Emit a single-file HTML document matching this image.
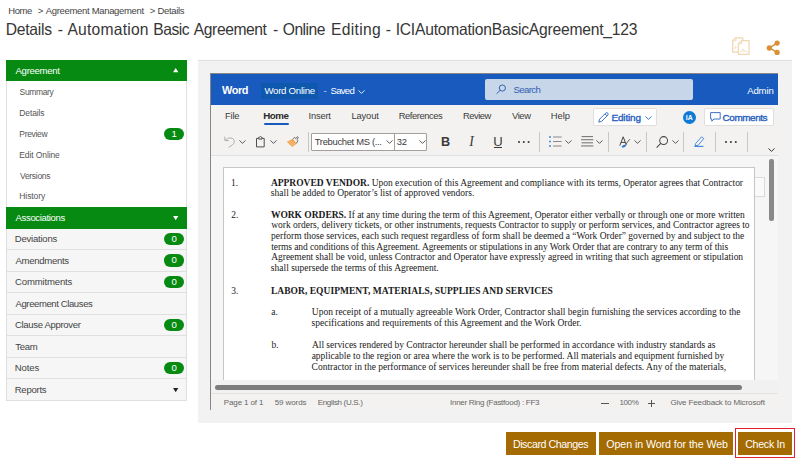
<!DOCTYPE html>
<html lang="en">
<head>
<meta charset="utf-8">
<title>Details - Automation Basic Agreement - Online Editing</title>
<style>
html,body{margin:0;padding:0;background:#fff;}
body{width:800px;height:463px;position:relative;overflow:hidden;font-family:"Liberation Sans",sans-serif;}
.a{position:absolute;box-sizing:border-box;}
.t{position:absolute;white-space:nowrap;font-family:"Liberation Sans",sans-serif;}
.g{background:#078a12;}
.row{position:absolute;left:6px;width:181.3px;box-sizing:border-box;background:#f6f6f6;border-left:1px solid #e0e0e0;border-right:1px solid #e0e0e0;border-bottom:1px solid #e0e0e0;}
.badge{position:absolute;left:164.3px;width:19.7px;height:12.4px;border-radius:6.2px;background:#078a12;color:#fff;font-size:9.6px;line-height:12.6px;text-align:center;}
.sep{position:absolute;width:1px;background:#c8c6c4;top:131.5px;height:20px;}
.btn{position:absolute;top:432px;height:22.5px;background:#a46b03;}
svg{position:absolute;overflow:visible;}
</style>
</head>
<body>
<!-- top-right icons -->
<svg style="left:732px;top:37px" width="18" height="18" viewBox="0 0 18 18" fill="none" stroke="#f0d8b0" stroke-width="1.25" stroke-linejoin="round">
  <path d="M6 15.2H0.7V3.6L3.8 0.8H10.8V3.4"/>
  <path d="M3.9 0.9V3.8H0.9" stroke-width="0.9"/>
  <path d="M6.4 17.4V6.6L9.6 3.6H17V17.4Z" fill="#fff"/>
  <path d="M9.7 3.8V6.8H6.6" stroke-width="0.9"/>
  <path d="M8 15.2L9.6 14.6L10.6 12L11.6 14.4L12.8 13.2L14 14.8L15.6 15" stroke-width="0.8"/>
  <path d="M2.6 12.4L3.6 9.2L4.4 11" stroke-width="0.8"/>
</svg>
<svg style="left:765.5px;top:39.5px" width="15" height="16" viewBox="0 0 15 16">
  <path d="M3.4 7.9L11.1 3.1M3.4 7.9L11.1 12.4" stroke="#db9036" stroke-width="1.6" fill="none"/>
  <circle cx="11.1" cy="3.1" r="2.65" fill="#db9036"/>
  <circle cx="3.4" cy="7.9" r="2.75" fill="#db9036"/>
  <circle cx="11.1" cy="12.4" r="2.65" fill="#db9036"/>
</svg>

<!-- sidebar -->
<div class="a g" style="left:6px;top:60px;width:181.3px;height:21.3px"></div>
<div class="a" style="left:6px;top:81px;width:181.3px;height:126.5px;background:#fff;border-left:1px solid #e0e0e0;border-right:1px solid #e0e0e0;"></div>
<div class="a g" style="left:6px;top:207.3px;width:181.3px;height:21.4px"></div>
<div class="row" style="top:228.6px;height:21.5px"></div>
<div class="row" style="top:250.1px;height:21.5px"></div>
<div class="row" style="top:271.6px;height:21.5px"></div>
<div class="row" style="top:293.1px;height:21.5px"></div>
<div class="row" style="top:314.6px;height:21.5px"></div>
<div class="row" style="top:336.1px;height:21.5px"></div>
<div class="row" style="top:357.6px;height:21.5px"></div>
<div class="row" style="top:379.1px;height:21.5px"></div>
<svg style="left:172.8px;top:68.2px" width="5.4" height="4.2" viewBox="0 0 10 8"><path d="M0 8L5 0L10 8Z" fill="#fff"/></svg>
<svg style="left:172.8px;top:216px" width="5.4" height="4.2" viewBox="0 0 10 8"><path d="M0 0L5 8L10 0Z" fill="#fff"/></svg>
<svg style="left:172.8px;top:387.6px" width="5.4" height="4.2" viewBox="0 0 10 8"><path d="M0 0L5 8L10 0Z" fill="#222"/></svg>
<div class="badge" style="top:127.6px">1</div>
<div class="badge" style="top:232.9px">0</div>
<div class="badge" style="top:254.4px">0</div>
<div class="badge" style="top:275.9px">0</div>
<div class="badge" style="top:318.9px">0</div>
<div class="badge" style="top:361.9px">0</div>

<!-- main panel -->
<div class="a" style="left:197.7px;top:60px;width:594px;height:363px;background:#f2f2f2;border-top:1px solid #dedede;"></div>
<!-- iframe border -->
<div class="a" style="left:210px;top:73.2px;width:568.4px;height:337.3px;background:#868686;"></div>
<div class="a" style="left:211px;top:74.2px;width:567.4px;height:336.3px;background:#e9e9e9;"></div>
<div class="a" style="left:211px;top:74.2px;width:566.6px;height:335.4px;background:#f3f2f1;"></div>
<!-- blue header -->
<div class="a" style="left:211px;top:74px;width:566.6px;height:31px;background:#185abd;"></div>
<div class="a" style="left:261.2px;top:83.2px;width:56.5px;height:15.5px;background:#0e58ad;"></div>
<div class="a" style="left:485px;top:79.2px;width:207.6px;height:20.6px;background:#c8d6ea;border-radius:2px;"></div>
<svg style="left:495.8px;top:84.2px" width="10.6" height="10.6" viewBox="0 0 11 11" fill="none" stroke="#2f5fae" stroke-width="1"><circle cx="6.6" cy="4.2" r="3.2"/><path d="M4.3 6.5L0.6 10.2"/></svg>
<svg style="left:357.5px;top:89.5px" width="7" height="4" viewBox="0 0 7 4" fill="none" stroke="#fff" stroke-width="0.9"><path d="M0.5 0.4L3.5 3.4L6.5 0.4"/></svg>
<!-- tab underline -->
<div class="a" style="left:263.8px;top:123.4px;width:24.9px;height:2px;background:#185abd;border-radius:1px"></div>
<!-- editing / comments buttons -->
<div class="a" style="left:592.8px;top:108.4px;width:64px;height:17.4px;background:#fff;border:1px solid #e1dfdd;border-radius:2px;"></div>
<div class="a" style="left:704.4px;top:108.4px;width:69.4px;height:17.4px;background:#fff;border:1px solid #e1dfdd;border-radius:2px;"></div>
<svg style="left:598px;top:111.5px" width="11" height="11" viewBox="0 0 11 11" fill="none" stroke="#2b62c0" stroke-width="0.9"><path d="M0.8 10.2L1.6 7.2L7.9 0.9Q8.9 0.2 9.8 1.2Q10.6 2.1 9.9 3L3.7 9.3Z"/><path d="M7 1.9L9 3.9"/></svg>
<svg style="left:644.5px;top:115.5px" width="7" height="4" viewBox="0 0 7 4" fill="none" stroke="#2b62c0" stroke-width="0.9"><path d="M0.5 0.4L3.5 3.4L6.5 0.4"/></svg>
<div class="a" style="left:683px;top:110.5px;width:13px;height:13px;border-radius:50%;background:#0f7ad6;"></div>
<svg style="left:710px;top:112px" width="11" height="10" viewBox="0 0 11 10" fill="none" stroke="#2b62c0" stroke-width="0.9"><path d="M0.6 0.6H10.2V7H4L1.8 9.2V7H0.6Z"/></svg>

<!-- toolbar -->
<svg style="left:224px;top:136px" width="12" height="12" viewBox="0 0 12 12" fill="none" stroke="#b3b0ad" stroke-width="1"><path d="M0.8 0.6V4.6H4.8"/><path d="M1 4.4Q4.5 0.6 8.4 2.2Q11.4 4 10 7.2Q9 9 4.6 11.4"/></svg>
<svg style="left:238.5px;top:139.6px" width="7" height="4" viewBox="0 0 7 4" fill="none" stroke="#484644" stroke-width="0.9"><path d="M0.5 0.4L3.5 3.4L6.5 0.4"/></svg>
<svg style="left:255px;top:135px" width="11" height="13" viewBox="0 0 11 13" fill="none" stroke="#484644" stroke-width="0.95"><path d="M3.5 3.4H1.5V11.9H9.2V3.4H7.2"/><path d="M3.7 4.1V2.2H4.6Q5.35 0.7 6.1 2.2H7V4.1Z" fill="#f3f2f1"/></svg>
<svg style="left:270px;top:139.5px" width="7" height="4" viewBox="0 0 7 4" fill="none" stroke="#484644" stroke-width="0.9"><path d="M0.5 0.4L3.5 3.4L6.5 0.4"/></svg>
<svg style="left:286px;top:135.5px" width="13" height="12" viewBox="0 0 13 12"><path d="M0.8 5.8L6.8 2.7L10.6 7.7L6.3 11.1Z" fill="#f2a24c"/><path d="M2.6 5.6L8 10M4.4 4.6L9.4 8.8" stroke="#fbdcb4" stroke-width="0.6" fill="none"/><path d="M6.9 2.8L8.6 1.5L9.9 2.5L11.3 0.7L12.4 1.5L11 3.5L11.8 4.7L10.5 7.4" fill="none" stroke="#605e5c" stroke-width="0.9"/></svg>
<div class="sep" style="left:308.2px"></div>
<div class="a" style="left:311px;top:132.5px;width:116.4px;height:18.3px;background:#fff;border:1px solid #a19f9d;border-radius:1px;"></div>
<div class="a" style="left:394px;top:132.5px;width:1px;height:18.3px;background:#a19f9d;"></div>
<svg style="left:385.5px;top:139.5px" width="7" height="4" viewBox="0 0 7 4" fill="none" stroke="#484644" stroke-width="0.9"><path d="M0.5 0.4L3.5 3.4L6.5 0.4"/></svg>
<svg style="left:418.5px;top:139.5px" width="7" height="4" viewBox="0 0 7 4" fill="none" stroke="#484644" stroke-width="0.9"><path d="M0.5 0.4L3.5 3.4L6.5 0.4"/></svg>
<div class="a" style="left:494px;top:147.3px;width:7.8px;height:1px;background:#3b3a39;"></div>
<svg style="left:517.5px;top:140.5px" width="12" height="2" viewBox="0 0 12 2" fill="#3b3a39"><circle cx="1" cy="1" r="1.05"/><circle cx="5.8" cy="1" r="1.05"/><circle cx="10.6" cy="1" r="1.05"/></svg>
<div class="sep" style="left:539.2px"></div>
<svg style="left:549.3px;top:135.6px" width="13" height="11" viewBox="0 0 13 11"><g fill="#1f7fd6"><rect x="0.2" y="0.2" width="1.6" height="1.6"/><rect x="0.2" y="4.7" width="1.6" height="1.6"/><rect x="0.2" y="9.2" width="1.6" height="1.6"/></g><g fill="#8a8886"><rect x="4" y="0.5" width="8.6" height="1"/><rect x="4" y="5" width="8.6" height="1"/><rect x="4" y="9.5" width="8.6" height="1"/></g></svg>
<svg style="left:565px;top:139.5px" width="7" height="4" viewBox="0 0 7 4" fill="none" stroke="#484644" stroke-width="0.9"><path d="M0.5 0.4L3.5 3.4L6.5 0.4"/></svg>
<svg style="left:580.6px;top:135.9px" width="12.4" height="11" viewBox="0 0 12.4 11" fill="#605e5c"><rect x="0.6" y="0.2" width="11.4" height="0.9"/><rect x="0" y="3.3" width="12.4" height="0.9"/><rect x="0.6" y="6.4" width="11.4" height="0.9"/><rect x="0" y="9.5" width="12.4" height="0.9"/></svg>
<svg style="left:596px;top:139.5px" width="7" height="4" viewBox="0 0 7 4" fill="none" stroke="#484644" stroke-width="0.9"><path d="M0.5 0.4L3.5 3.4L6.5 0.4"/></svg>
<div class="sep" style="left:608.3px"></div>
<svg style="left:619.4px;top:136px" width="12" height="12" viewBox="0 0 12 12" fill="none"><path d="M0.8 9.6L4.2 0.8L7.4 9.2M2 6.4H6.2" stroke="#484644" stroke-width="1"/><path d="M10.8 3.2L6.6 8.4" stroke="#605e5c" stroke-width="1"/><path d="M2.6 10.2Q5 8 7 9Q6.8 11.6 3 11.6Z" fill="#2b7cd3"/></svg>
<svg style="left:633.7px;top:139.5px" width="7" height="4" viewBox="0 0 7 4" fill="none" stroke="#484644" stroke-width="0.9"><path d="M0.5 0.4L3.5 3.4L6.5 0.4"/></svg>
<div class="sep" style="left:646.2px"></div>
<svg style="left:656px;top:135.8px" width="12.4" height="12.4" viewBox="0 0 12 12" fill="none" stroke="#484644" stroke-width="1"><circle cx="7.4" cy="4.4" r="3.8"/><path d="M4.6 7.2L0.6 11.2"/></svg>
<svg style="left:671.6px;top:139.5px" width="7" height="4" viewBox="0 0 7 4" fill="none" stroke="#484644" stroke-width="0.9"><path d="M0.5 0.4L3.5 3.4L6.5 0.4"/></svg>
<div class="sep" style="left:683.3px"></div>
<svg style="left:693.8px;top:136.3px" width="11" height="11" viewBox="0 0 11 11" fill="none" stroke="#3c83dd" stroke-width="0.9"><path d="M1.6 7.6L7.6 0.8L9.8 2.6L4 9.4L1 9.6Z"/><path d="M0.4 10.4H9.4" stroke-width="1.1"/></svg>
<div class="sep" style="left:715.2px"></div>
<svg style="left:724.7px;top:140.5px" width="12" height="2" viewBox="0 0 12 2" fill="#3b3a39"><circle cx="1" cy="1" r="1.05"/><circle cx="5.9" cy="1" r="1.05"/><circle cx="10.8" cy="1" r="1.05"/></svg>
<div class="sep" style="left:747px"></div>
<svg style="left:768.4px;top:147.8px" width="7" height="4" viewBox="0 0 7 4" fill="none" stroke="#323130" stroke-width="1"><path d="M0.5 0.4L3.5 3.4L6.5 0.4"/></svg>

<!-- document canvas -->
<div class="a" style="left:211px;top:154.8px;width:566.6px;height:238.4px;background:#f6f6f6;border-top:1px solid #e0e0e0;"></div>
<div class="a" style="left:223.2px;top:167px;width:531.9px;height:212.5px;background:#fff;border:1px solid #c6c6c6;border-bottom:none;"></div>
<div class="a" style="left:754.6px;top:177.3px;width:10.4px;height:20px;background:#fafafa;border:1px solid #dadada;border-left:none;"></div>
<div class="a" style="left:211px;top:379.5px;width:566.6px;height:14px;background:#f1f1f1;"></div>
<!-- scrollbars -->
<div class="a" style="left:769.1px;top:158.7px;width:5.3px;height:62.8px;background:#8a8989;border-radius:2px;"></div>
<div class="a" style="left:215px;top:384.5px;width:527px;height:5.2px;background:#7d7d7d;border-radius:2.6px;"></div>
<!-- status bar -->
<div class="a" style="left:211px;top:393.2px;width:566.6px;height:16.6px;background:#f3f2f1;border-top:1px solid #e3e3e3;"></div>
<div class="a" style="left:601.3px;top:402.6px;width:7.6px;height:1px;background:#555;"></div>
<div class="a" style="left:648px;top:402.6px;width:7px;height:1px;background:#555;"></div>
<div class="a" style="left:651px;top:399.6px;width:1px;height:7px;background:#555;"></div>

<!-- buttons -->
<div class="btn" style="left:506.3px;width:89.4px"></div>
<div class="btn" style="left:599.3px;width:133.7px"></div>
<div class="btn" style="left:738.3px;width:53.5px"></div>
<div class="a" style="left:735px;top:428px;width:60px;height:29.6px;border:1.5px solid #e5202e;"></div>

<span class="t" style='left:8.24px;top:5.25px;font-size:9.48px;line-height:11.38px;color:#444;letter-spacing:-0.380px;'>Home</span>
<span class="t" style='left:37.73px;top:5.25px;font-size:9.48px;line-height:11.38px;color:#444;letter-spacing:0.000px;'>&gt;</span>
<span class="t" style='left:45.75px;top:5.25px;font-size:9.48px;line-height:11.38px;color:#444;letter-spacing:-0.306px;'>Agreement Management</span>
<span class="t" style='left:149.73px;top:5.25px;font-size:9.48px;line-height:11.38px;color:#444;letter-spacing:0.000px;'>&gt;</span>
<span class="t" style='left:157.49px;top:5.25px;font-size:9.48px;line-height:11.38px;color:#444;letter-spacing:-0.314px;'>Details</span>
<span class="t" style='left:5.65px;top:20.54px;font-size:15.67px;line-height:18.8px;color:#363636;letter-spacing:-0.216px;'>Details</span>
<span class="t" style='left:57.66px;top:20.54px;font-size:15.67px;line-height:18.8px;color:#363636;letter-spacing:0.000px;'>-</span>
<span class="t" style='left:67.4px;top:20.54px;font-size:15.67px;line-height:18.8px;color:#363636;letter-spacing:0.221px;'>Automation</span>
<span class="t" style='left:153.35px;top:20.54px;font-size:15.67px;line-height:18.8px;color:#363636;letter-spacing:-0.518px;'>Basic</span>
<span class="t" style='left:193.8px;top:20.54px;font-size:15.67px;line-height:18.8px;color:#363636;letter-spacing:-0.426px;'>Agreement</span>
<span class="t" style='left:273.11px;top:20.54px;font-size:15.67px;line-height:18.8px;color:#363636;letter-spacing:0.000px;'>-</span>
<span class="t" style='left:282.79px;top:20.54px;font-size:15.67px;line-height:18.8px;color:#363636;letter-spacing:-0.529px;'>Online</span>
<span class="t" style='left:330.95px;top:20.54px;font-size:15.67px;line-height:18.8px;color:#363636;letter-spacing:0.316px;'>Editing</span>
<span class="t" style='left:385.81px;top:20.54px;font-size:15.67px;line-height:18.8px;color:#363636;letter-spacing:0.000px;'>-</span>
<span class="t" style='left:395.69px;top:20.54px;font-size:15.67px;line-height:18.8px;color:#363636;letter-spacing:-0.239px;'>ICIAutomationBasicAgreement_123</span>
<span class="t" style='left:15.5px;top:65.41px;font-size:9.55px;line-height:11.46px;color:#fff;letter-spacing:-0.273px;'>Agreement</span>
<span class="t" style='left:19.62px;top:87.46px;font-size:8.5px;line-height:10.2px;color:#555;letter-spacing:-0.381px;'>Summary</span>
<span class="t" style='left:19.32px;top:108.26px;font-size:8.5px;line-height:10.2px;color:#555;letter-spacing:-0.134px;'>Details</span>
<span class="t" style='left:19.32px;top:129.16px;font-size:8.5px;line-height:10.2px;color:#555;letter-spacing:-0.313px;'>Preview</span>
<span class="t" style='left:19.32px;top:149.96px;font-size:8.5px;line-height:10.2px;color:#555;letter-spacing:-0.110px;'>Edit Online</span>
<span class="t" style='left:20.0px;top:170.66px;font-size:8.5px;line-height:10.2px;color:#555;letter-spacing:-0.301px;'>Versions</span>
<span class="t" style='left:19.32px;top:191.46px;font-size:8.5px;line-height:10.2px;color:#555;letter-spacing:-0.094px;'>History</span>
<span class="t" style='left:15.5px;top:212.41px;font-size:9.55px;line-height:11.46px;color:#fff;letter-spacing:-0.343px;'>Associations</span>
<span class="t" style='left:14.74px;top:233.31px;font-size:9.55px;line-height:11.46px;color:#444;letter-spacing:-0.221px;'>Deviations</span>
<span class="t" style='left:15.5px;top:255.01px;font-size:9.55px;line-height:11.46px;color:#444;letter-spacing:-0.298px;'>Amendments</span>
<span class="t" style='left:15.02px;top:276.41px;font-size:9.55px;line-height:11.46px;color:#444;letter-spacing:-0.159px;'>Commitments</span>
<span class="t" style='left:15.5px;top:297.81px;font-size:9.55px;line-height:11.46px;color:#444;letter-spacing:-0.409px;'>Agreement Clauses</span>
<span class="t" style='left:15.02px;top:319.31px;font-size:9.55px;line-height:11.46px;color:#444;letter-spacing:-0.341px;'>Clause Approver</span>
<span class="t" style='left:15.31px;top:340.81px;font-size:9.55px;line-height:11.46px;color:#444;letter-spacing:-0.353px;'>Team</span>
<span class="t" style='left:14.74px;top:362.21px;font-size:9.55px;line-height:11.46px;color:#444;letter-spacing:-0.087px;'>Notes</span>
<span class="t" style='left:14.74px;top:383.61px;font-size:9.55px;line-height:11.46px;color:#444;letter-spacing:-0.265px;'>Reports</span>
<span class="t" style='left:222.0px;top:83.77px;font-size:10.92px;line-height:13.1px;color:#fff;font-weight:700;letter-spacing:-0.427px;'>Word</span>
<span class="t" style='left:264.4px;top:84.87px;font-size:9.62px;line-height:11.54px;color:#fff;letter-spacing:-0.249px;'>Word Online</span>
<span class="t" style='left:323.61px;top:85.37px;font-size:9.62px;line-height:11.54px;color:#c9d8f0;letter-spacing:0.000px;'>-</span>
<span class="t" style='left:330.57px;top:85.37px;font-size:9.62px;line-height:11.54px;color:#fff;letter-spacing:-0.764px;'>Saved</span>
<span class="t" style='left:513.47px;top:83.77px;font-size:9.62px;line-height:11.54px;color:#2f5fae;letter-spacing:-0.632px;'>Search</span>
<span class="t" style='left:747.2px;top:84.77px;font-size:9.62px;line-height:11.54px;color:#fff;letter-spacing:-0.170px;'>Admin</span>
<span class="t" style='left:225.05px;top:110.93px;font-size:9.37px;line-height:11.24px;color:#3b3a39;letter-spacing:-0.221px;'>File</span>
<span class="t" style='left:263.17px;top:110.19px;font-size:9.75px;line-height:11.7px;color:#2b2a29;font-weight:700;letter-spacing:-0.417px;'>Home</span>
<span class="t" style='left:308.56px;top:110.93px;font-size:9.37px;line-height:11.24px;color:#3b3a39;letter-spacing:-0.213px;'>Insert</span>
<span class="t" style='left:351.55px;top:110.93px;font-size:9.37px;line-height:11.24px;color:#3b3a39;letter-spacing:-0.171px;'>Layout</span>
<span class="t" style='left:398.65px;top:110.93px;font-size:9.37px;line-height:11.24px;color:#3b3a39;letter-spacing:-0.426px;'>References</span>
<span class="t" style='left:462.95px;top:110.93px;font-size:9.37px;line-height:11.24px;color:#3b3a39;letter-spacing:-0.480px;'>Review</span>
<span class="t" style='left:512.0px;top:110.93px;font-size:9.37px;line-height:11.24px;color:#3b3a39;letter-spacing:-0.389px;'>View</span>
<span class="t" style='left:550.65px;top:110.93px;font-size:9.37px;line-height:11.24px;color:#3b3a39;letter-spacing:0.055px;'>Help</span>
<span class="t" style='left:611.5px;top:111.57px;font-size:9.94px;line-height:11.93px;color:#2b62c0;letter-spacing:-0.148px;-webkit-text-stroke:0.4px #2b62c0;'>Editing</span>
<span class="t" style='left:722.6px;top:111.57px;font-size:9.94px;line-height:11.93px;color:#2b62c0;letter-spacing:-0.430px;-webkit-text-stroke:0.4px #2b62c0;'>Comments</span>
<span class="t" style='left:685.7515000000001px;top:113.75px;font-size:6.9px;line-height:8.28px;color:#fff;font-weight:700;letter-spacing:0.000px;'>IA</span>
<span class="t" style='left:314.81px;top:136.49px;font-size:9.42px;line-height:11.3px;color:#3b3a39;letter-spacing:-0.325px;'>Trebuchet MS (...</span>
<span class="t" style='left:396.67px;top:136.49px;font-size:9.42px;line-height:11.3px;color:#3b3a39;letter-spacing:-0.213px;'>32</span>
<span class="t" style='left:441.0px;top:135.21px;font-size:12.63px;line-height:15.16px;color:#3b3a39;font-weight:700;letter-spacing:0.000px;'>B</span>
<span class="t" style='left:469.368px;top:133.94px;font-size:13.6px;line-height:16.32px;color:#3b3a39;font-family:"Liberation Serif", serif;letter-spacing:-0.168px;font-style:italic;'>I</span>
<span class="t" style='left:493.14px;top:133.83px;font-size:13.08px;line-height:15.7px;color:#3b3a39;letter-spacing:0.000px;'>U</span>
<span class="t" style='left:223.86px;top:398.26px;font-size:8.02px;line-height:9.62px;color:#666;letter-spacing:-0.151px;'>Page 1 of 1</span>
<span class="t" style='left:274.68px;top:398.26px;font-size:8.02px;line-height:9.62px;color:#666;letter-spacing:-0.092px;'>59 words</span>
<span class="t" style='left:317.66px;top:398.26px;font-size:8.02px;line-height:9.62px;color:#666;letter-spacing:-0.320px;'>English (U.S.)</span>
<span class="t" style='left:450.03px;top:398.26px;font-size:8.02px;line-height:9.62px;color:#666;letter-spacing:-0.276px;'>Inner Ring (Fastfood) : FF3</span>
<span class="t" style='left:619.4px;top:398.26px;font-size:8.02px;line-height:9.62px;color:#666;letter-spacing:-0.379px;'>100%</span>
<span class="t" style='left:670.4px;top:398.26px;font-size:8.02px;line-height:9.62px;color:#666;letter-spacing:-0.120px;'>Give Feedback to Microsoft</span>
<span class="t" style='left:512.9px;top:438.06px;font-size:10.61px;line-height:12.73px;color:#fff;letter-spacing:-0.404px;'>Discard Changes</span>
<span class="t" style='left:606.27px;top:438.06px;font-size:10.61px;line-height:12.73px;color:#fff;letter-spacing:-0.052px;'>Open in Word for the Web</span>
<span class="t" style='left:745.22px;top:438.06px;font-size:10.61px;line-height:12.73px;color:#fff;letter-spacing:-0.277px;'>Check In</span>
<span class="t" style='left:230.94335px;top:177.53px;font-size:9.49px;line-height:11.39px;color:#1a1a1a;font-family:"Liberation Serif", serif;letter-spacing:0.000px;'>1.</span>
<span class="t" style='left:231.3704px;top:209.53px;font-size:9.49px;line-height:11.39px;color:#1a1a1a;font-family:"Liberation Serif", serif;letter-spacing:0.000px;'>2.</span>
<span class="t" style='left:231.32295px;top:285.73px;font-size:9.49px;line-height:11.39px;color:#1a1a1a;font-family:"Liberation Serif", serif;letter-spacing:0.000px;'>3.</span>
<span class="t" style='left:271.26785px;top:307.43px;font-size:9.49px;line-height:11.39px;color:#1a1a1a;font-family:"Liberation Serif", serif;letter-spacing:0.000px;'>a.</span>
<span class="t" style='left:271.6px;top:339.93px;font-size:9.49px;line-height:11.39px;color:#1a1a1a;font-family:"Liberation Serif", serif;letter-spacing:0.000px;'>b.</span>
<span class="t" style='left:270.95px;top:177.53px;font-size:9.49px;line-height:11.39px;color:#1a1a1a;font-family:"Liberation Serif", serif;letter-spacing:-0.000px;'><b>APPROVED VENDOR.</b> Upon execution of this Agreement and compliance with its terms, Operator agrees that Contractor</span>
<span class="t" style='left:270.8704px;top:188.23px;font-size:9.49px;line-height:11.39px;color:#1a1a1a;font-family:"Liberation Serif", serif;letter-spacing:0.000px;'>shall be added to Operator’s list of approved vendors.</span>
<span class="t" style='left:270.95px;top:209.53px;font-size:9.49px;line-height:11.39px;color:#1a1a1a;font-family:"Liberation Serif", serif;letter-spacing:-0.012px;'><b>WORK ORDERS.</b> If at any time during the term of this Agreement, Operator either verbally or through one or more written</span>
<span class="t" style='left:271.25px;top:220.23px;font-size:9.49px;line-height:11.39px;color:#1a1a1a;font-family:"Liberation Serif", serif;letter-spacing:-0.010px;'>work orders, delivery tickets, or other instruments, requests Contractor to supply or perform services, and Contractor agrees to</span>
<span class="t" style='left:271.10765px;top:230.93px;font-size:9.49px;line-height:11.39px;color:#1a1a1a;font-family:"Liberation Serif", serif;letter-spacing:-0.007px;'>perform those services, each such request regardless of form shall be deemed a “Work Order” governed by and subject to the</span>
<span class="t" style='left:271.20255px;top:241.63px;font-size:9.49px;line-height:11.39px;color:#1a1a1a;font-family:"Liberation Serif", serif;letter-spacing:-0.071px;'>terms and conditions of this Agreement. Agreements or stipulations in any Work Order that are contrary to any term of this</span>
<span class="t" style='left:271.20255px;top:252.33px;font-size:9.49px;line-height:11.39px;color:#1a1a1a;font-family:"Liberation Serif", serif;letter-spacing:-0.009px;'>Agreement shall be void, unless Contractor and Operator have expressly agreed in writing that such agreement or stipulation</span>
<span class="t" style='left:270.8704px;top:263.03px;font-size:9.49px;line-height:11.39px;color:#1a1a1a;font-family:"Liberation Serif", serif;letter-spacing:0.000px;'>shall supersede the terms of this Agreement.</span>
<span class="t" style='left:270.95px;top:285.73px;font-size:9.49px;line-height:11.39px;color:#1a1a1a;font-family:"Liberation Serif", serif;letter-spacing:0.046px;'><b>LABOR, EQUIPMENT, MATERIALS, SUPPLIES AND SERVICES</b></span>
<span class="t" style='left:311.8102px;top:307.43px;font-size:9.49px;line-height:11.39px;color:#1a1a1a;font-family:"Liberation Serif", serif;letter-spacing:0.000px;'>Upon receipt of a mutually agreeable Work Order, Contractor shall begin furnishing the services according to the</span>
<span class="t" style='left:311.6204px;top:318.13px;font-size:9.49px;line-height:11.39px;color:#1a1a1a;font-family:"Liberation Serif", serif;letter-spacing:0.000px;'>specifications and requirements of this Agreement and the Work Order.</span>
<span class="t" style='left:311.95255px;top:339.93px;font-size:9.49px;line-height:11.39px;color:#1a1a1a;font-family:"Liberation Serif", serif;letter-spacing:-0.016px;'>All services rendered by Contractor hereunder shall be performed in accordance with industry standards as</span>
<span class="t" style='left:311.66785px;top:351.13px;font-size:9.49px;line-height:11.39px;color:#1a1a1a;font-family:"Liberation Serif", serif;letter-spacing:0.000px;'>applicable to the region or area where the work is to be performed. All materials and equipment furnished by</span>
<span class="t" style='left:311.6204px;top:362.33px;font-size:9.49px;line-height:11.39px;color:#1a1a1a;font-family:"Liberation Serif", serif;letter-spacing:0.000px;'>Contractor in the performance of services hereunder shall be free from material defects. Any of the materials,</span>
</body>
</html>
